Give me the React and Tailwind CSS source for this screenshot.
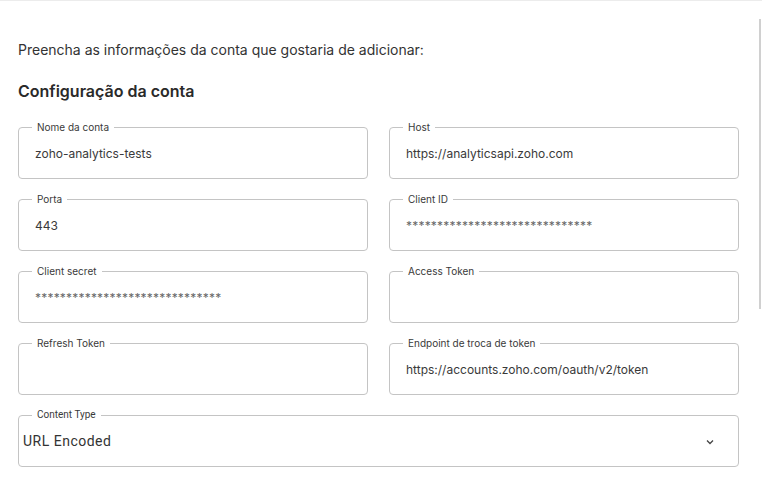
import React from "react";

const stars = "******************************";

function Field({ label, value, masked, className = "" }) {
  return (
    <fieldset
      className={`border border-[#c4c4c4] rounded-[4px] px-[16px] m-0 min-w-0 h-[58px] ${className}`}
    >
      <legend className="px-[5px] ml-[-3px] text-[10px] leading-[12px] text-[#3a3a3a]">{label}</legend>
      <div
        className={`h-[39px] flex items-center pt-[2px] ${
          masked ? "text-[12px] tracking-[0.2px] text-[#666]" : "text-[12px] text-[#3a3a3a]"
        }`}
      >
        {value}
      </div>
    </fieldset>
  );
}

export default function App() {
  return (
    <div
      className="relative w-[762px] h-[484px] bg-white overflow-hidden border-t border-[#ececec]"
      style={{ fontFamily: "Inter, 'Noto Sans', sans-serif" }}
    >
      <div className="absolute right-[1px] top-[18px] w-[2px] h-[290px] bg-[#d0d0d0]" />
      <div className="pl-[18px] pr-[23px] pt-[40px]">
        <p className="text-[14px] leading-[18px] text-[#333]">
          Preencha as informações da conta que gostaria de adicionar:
        </p>
        <h2 className="mt-[22px] text-[16px] leading-[20px] font-semibold text-[#2a2a2a]">
          Configuração da conta
        </h2>
        <div className="mt-[20px] grid grid-cols-2 gap-x-[21px] gap-y-[14px]">
          <Field label="Nome da conta" value="zoho-analytics-tests" />
          <Field label="Host" value="https://analyticsapi.zoho.com" />
          <Field label="Porta" value="443" />
          <Field label="Client ID" value={stars} masked />
          <Field label="Client secret" value={stars} masked />
          <Field label="Access Token" value="" />
          <Field label="Refresh Token" value="" />
          <Field label="Endpoint de troca de token" value="https://accounts.zoho.com/oauth/v2/token" />
          <fieldset className="col-span-2 border border-[#c4c4c4] rounded-[4px] pl-[4px] pr-[24px] m-0 min-w-0 h-[58px]">
            <legend
              className="ml-[9px] px-[5px] text-[10px] leading-[12px] text-[#3a3a3a]"
              style={{ fontFamily: "Roboto, sans-serif" }}
            >
              Content Type
            </legend>
            <div
              className="h-[39px] flex items-center justify-between pt-[2px] text-[14px] tracking-[0.5px] text-[#333]"
              style={{ fontFamily: "Roboto, sans-serif" }}
            >
              <span>URL Encoded</span>
              <svg width="8" height="6" viewBox="0 0 8 6" fill="none" stroke="#444" strokeWidth="1.3">
                <path d="M1 1.5l3 3 3-3" />
              </svg>
            </div>
          </fieldset>
        </div>
      </div>
    </div>
  );
}
